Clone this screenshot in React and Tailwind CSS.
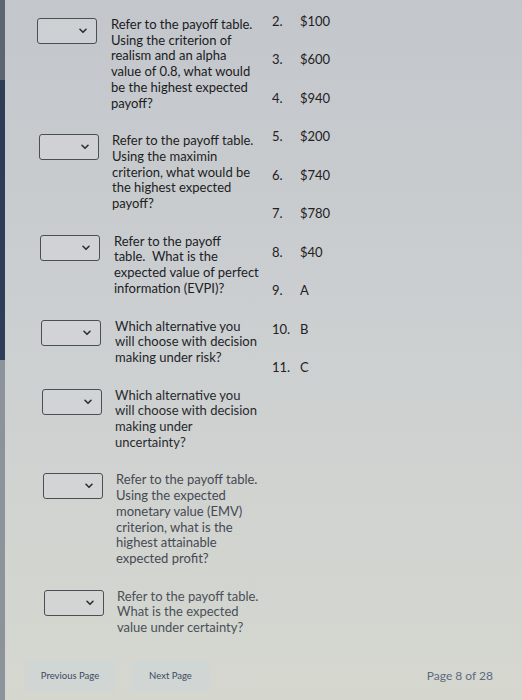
import React from "react";

const questions = [
  {
    pad: "pl-[32px]",
    gap: "gap-[14px]",
    tone: "text-[#1a1b1e]",
    lines: [
      "Refer to the payoff table.",
      "Using the criterion of",
      "realism and an alpha",
      "value of 0.8, what would",
      "be the highest expected",
      "payoff?",
    ],
  },
  {
    pad: "pl-[34px]",
    gap: "gap-[13px]",
    tone: "text-[#1d1e21]",
    lines: [
      "Refer to the payoff table.",
      "Using the maximin",
      "criterion, what would be",
      "the highest expected",
      "payoff?",
    ],
  },
  {
    pad: "pl-[35px]",
    gap: "gap-[14px]",
    tone: "text-[#202125]",
    lines: [
      "Refer to the payoff",
      "table.  What is the",
      "expected value of perfect",
      "information (EVPI)?",
    ],
  },
  {
    pad: "pl-[36px]",
    gap: "gap-[14px]",
    tone: "text-[#232529]",
    lines: ["Which alternative you", "will choose with decision", "making under risk?"],
  },
  {
    pad: "pl-[37px]",
    gap: "gap-[13px]",
    tone: "text-[#282a2e]",
    lines: [
      "Which alternative you",
      "will choose with decision",
      "making under",
      "uncertainty?",
    ],
  },
  {
    pad: "pl-[38px]",
    gap: "gap-[13px]",
    tone: "text-[#454a52]",
    lines: [
      "Refer to the payoff table.",
      "Using the expected",
      "monetary value (EMV)",
      "criterion, what is the",
      "highest attainable",
      "expected profit?",
    ],
  },
  {
    pad: "pl-[39px]",
    gap: "gap-[13px]",
    tone: "text-[#4a5058]",
    lines: [
      "Refer to the payoff table.",
      "What is the expected",
      "value under certainty?",
    ],
  },
];

const answers = [
  ["2.", "$100"],
  ["3.", "$600"],
  ["4.", "$940"],
  ["5.", "$200"],
  ["6.", "$740"],
  ["7.", "$780"],
  ["8.", "$40"],
  ["9.", "A"],
  ["10.", "B"],
  ["11.", "C"],
];

function Dropdown() {
  return (
    <div className="mt-[1px] flex h-[26px] w-[60px] shrink-0 items-center justify-end rounded-[3px] border-[1.5px] border-[#4b4f55] bg-[#d3d6d9]/60 pr-[9px]">
      <svg width="8" height="6" viewBox="0 0 8 6" fill="none">
        <path d="M1 1.3 L4 4.3 L7 1.3" stroke="#2b2e33" strokeWidth="1.6" strokeLinecap="round" strokeLinejoin="round" />
      </svg>
    </div>
  );
}

export default function App() {
  return (
    <div
      className="flex h-[700px] w-[522px] overflow-hidden bg-linear-to-b from-[#c3c6cb] via-[#cdd0d1] to-[#d5d7cf]"
      style={{ fontFamily: "Lato, 'Noto Sans', sans-serif" }}
    >
      <div className="flex w-[5px] shrink-0 flex-col">
        <div className="h-[80px] bg-[#5d6572]" />
        <div className="h-[280px] bg-[#2e3c58]" />
        <div className="flex-1 bg-[#8d939b]" />
      </div>
      <div className="flex flex-1 flex-col">
        <div className="flex flex-1 pt-[17px]">
          <div className="flex w-[263px] flex-col gap-[22px]">
            {questions.map((q, i) => (
              <div key={i} className={`flex ${q.pad} ${q.gap}`}>
                <Dropdown />
                <div className={`text-[13px] leading-[15.7px] ${q.tone}`}>
                  {q.lines.map((l, j) => (
                    <span key={j} className="block whitespace-pre">
                      {l}
                    </span>
                  ))}
                </div>
              </div>
            ))}
          </div>
          <div className="-mt-[15px] flex flex-col pl-[4px] text-[13px] text-[#1f2124]">
            {answers.map(([n, v]) => (
              <div key={n} className="flex h-[38.5px] items-center">
                <span className="w-[28px]">{n}</span>
                <span>{v}</span>
              </div>
            ))}
          </div>
        </div>
        <div className="mb-[8px] flex h-[32px] items-center pl-[20px] pr-[29px]">
          <div className="flex h-full w-[90px] items-center justify-center bg-[#cfd5d6]/70 text-[9.5px] text-[#3b4960]">
            Previous Page
          </div>
          <div className="ml-[16px] flex h-full w-[79px] items-center justify-center bg-[#cfd5d6]/70 text-[9.5px] text-[#3b4960]">
            Next Page
          </div>
          <div className="ml-auto text-[12px] text-[#5b6b80]">Page 8 of 28</div>
        </div>
      </div>
    </div>
  );
}
